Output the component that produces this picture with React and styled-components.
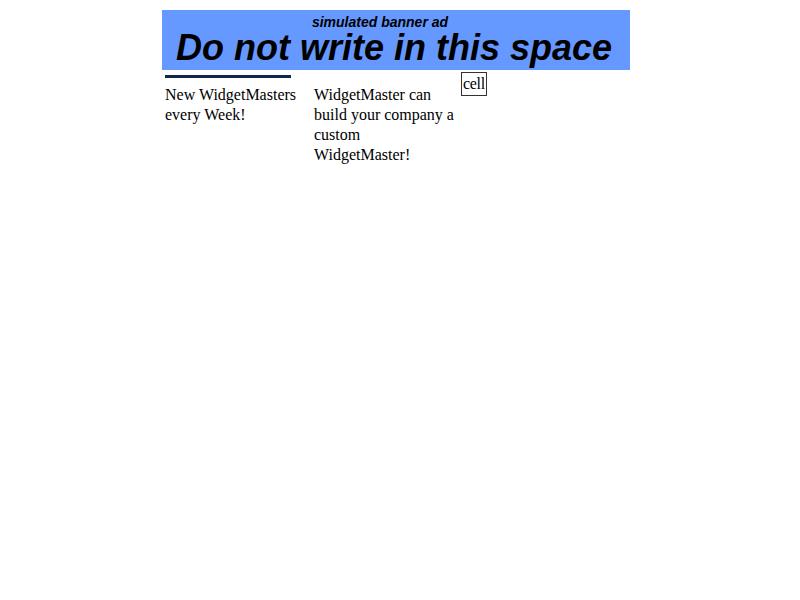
import React from 'react'
import styled, { createGlobalStyle } from 'styled-components'

const Global = createGlobalStyle`
  body {
    margin: 8px;
    background: #fff;
    font-family: "Liberation Serif", "Times New Roman", serif;
    font-size: 16px;
    color: #000;
  }
`;

const Page = styled.div`
  width: 468px;
  margin: 2px 0 0 154px;
`;

const Banner = styled.div`
  width: 468px;
  height: 60px;
  background: #6699ff;
  display: flex;
  flex-direction: column;
  align-items: center;
  font-family: "Liberation Sans", Arial, sans-serif;
  font-style: italic;
  font-weight: bold;
  color: #000;
  .banner__small {
    font-size: 14px;
    line-height: 12px;
    margin-top: 6px;
    padding-right: 32px;
  }
  .banner__big {
    font-size: 36px;
    line-height: 28px;
    margin-top: 6px;
    padding-right: 4px;
  }
`;

const Row = styled.div`
  display: flex;
  align-items: flex-start;
`;

const Column = styled.div`
  width: ${p => p.$width}px;
  margin-left: ${p => p.$offset}px;
  line-height: 20px;
  padding-top: ${p => p.$top}px;
  .col__bar {
    width: 126px;
    height: 3px;
    background: #0b2a4a;
    margin-bottom: 7px;
  }
`;

const Cell = styled.div`
  margin: 2px 0 0 7px;
  border: 1px solid #333;
  padding: 1px;
  line-height: 20px;
  letter-spacing: -0.3px;
`;

export default function App() {
  return (
    <Page>
      <Global />
      <Banner>
        <div className='banner__small'>simulated banner ad</div>
        <div className='banner__big'>Do not write in this space</div>
      </Banner>
      <Row>
        <Column $width={140} $offset={3} $top={5}>
          <div className='col__bar'></div>
          New WidgetMasters every Week!
        </Column>
        <Column $width={140} $offset={9} $top={15}>
          WidgetMaster can build your company a custom WidgetMaster!
        </Column>
        <Cell>cell</Cell>
      </Row>
    </Page>
  )
}
